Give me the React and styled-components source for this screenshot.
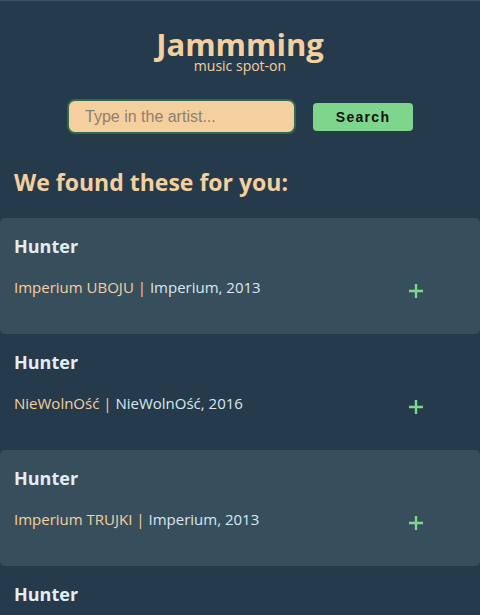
import React from 'react';
import styled, { createGlobalStyle } from 'styled-components';

const tracks = [
  { name: 'Hunter', artist: 'Imperium UBOJU', album: 'Imperium', year: 2013 },
  { name: 'Hunter', artist: 'NieWolnOść', album: 'NieWolnOść', year: 2016 },
  { name: 'Hunter', artist: 'Imperium TRUJKI', album: 'Imperium', year: 2013 },
  { name: 'Hunter', artist: 'Imperium UBOJU', album: 'Imperium', year: 2013 },
];

const GlobalStyle = createGlobalStyle`
  body {
    margin: 0;
    background: #253b4c;
    font-family: 'Open Sans', 'Noto Sans', sans-serif;
  }
`;

const Page = styled.div`
  min-height: 100vh;
  background: #253b4c;
  border-top: 1px solid #3a5262;
  box-sizing: border-box;
  overflow: hidden;
`;

const Header = styled.header`
  display: flex;
  flex-direction: column;
  align-items: center;
  padding-top: 28px;
`;

const Title = styled.h1`
  margin: 0;
  font-size: 31px;
  line-height: 30px;
  font-weight: 700;
  color: #f5d09e;
`;

const Subtitle = styled.div`
  font-size: 14px;
  line-height: 14px;
  font-weight: 400;
  color: #f5d09e;
`;

const SearchBar = styled.div`
  display: flex;
  justify-content: center;
  align-items: center;
  gap: 17px;
  margin-top: 26px;
`;

const Input = styled.input`
  width: 229px;
  height: 35px;
  box-sizing: border-box;
  padding: 0 16px;
  border: 2px solid #2e6a4f;
  border-radius: 8px;
  background: #f5d09e;
  font-family: 'Liberation Sans', Arial, sans-serif;
  font-size: 16px;
  color: #333;
  outline: none;

  &::placeholder {
    color: #8c7f70;
  }
`;

const Button = styled.button`
  width: 100px;
  height: 28px;
  border: 0;
  border-radius: 4px;
  background: #7dd68c;
  font-family: 'Liberation Sans', Arial, sans-serif;
  font-size: 14px;
  font-weight: 700;
  letter-spacing: 1.3px;
  color: #111;
  cursor: pointer;
`;

const Heading = styled.h2`
  margin: 33px 0 21px 14px;
  font-size: 23px;
  line-height: 30px;
  font-weight: 700;
  color: #f5d09e;
`;

const List = styled.div`
  display: flex;
  flex-direction: column;
`;

const Card = styled.div`
  height: 116px;
  box-sizing: border-box;
  padding: 16px 57px 0 14px;
  border-radius: 5px;
  background: ${p => (p.$alt ? '#374f5d' : 'transparent')};
`;

const Name = styled.div`
  font-size: 18px;
  line-height: 24px;
  font-weight: 700;
  color: #e2eef6;
`;

const Row = styled.div`
  display: flex;
  justify-content: space-between;
  align-items: center;
  margin-top: 18px;
`;

const Info = styled.div`
  font-size: 15px;
  line-height: 22px;
  color: #d9e8f1;
`;

const Artist = styled.span`
  color: #f5d09e;
`;

const AddButton = styled.button`
  display: flex;
  padding: 0;
  margin-top: 8px;
  border: 0;
  background: transparent;
  cursor: pointer;
`;

const Plus = () => (
  <svg width="14" height="14" viewBox="0 0 14 14">
    <path d="M7 0v14M0 7h14" stroke="#7dd68c" strokeWidth="2.4" />
  </svg>
);

export default function App() {
  return (
    <>
      <GlobalStyle />
      <Page>
        <Header>
          <Title>Jammming</Title>
          <Subtitle>music spot-on</Subtitle>
        </Header>
        <SearchBar>
          <Input placeholder="Type in the artist..." />
          <Button>Search</Button>
        </SearchBar>
        <Heading>We found these for you:</Heading>
        <List>
          {tracks.map((t, i) => (
            <Card key={i} $alt={i % 2 === 0}>
              <Name>{t.name}</Name>
              <Row>
                <Info>
                  <Artist>{t.artist} |</Artist> {t.album}, {t.year}
                </Info>
                <AddButton aria-label="add">
                  <Plus />
                </AddButton>
              </Row>
            </Card>
          ))}
        </List>
      </Page>
    </>
  );
}
